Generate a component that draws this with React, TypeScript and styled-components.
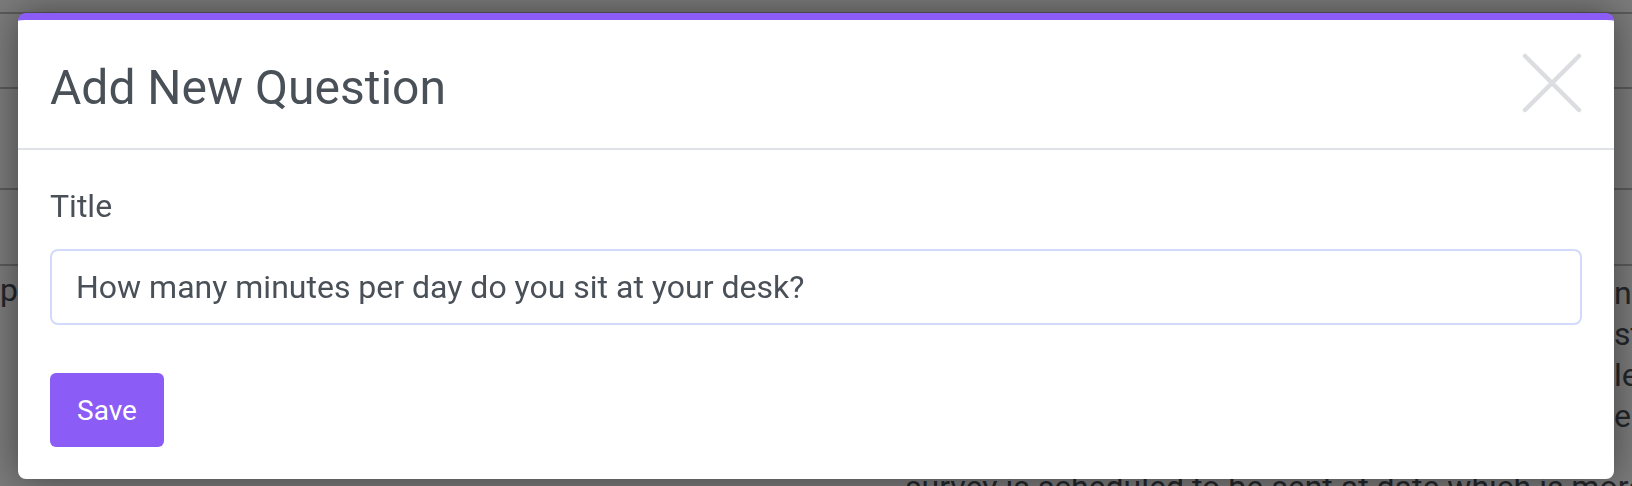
import { useEffect, useRef } from "react";
import styled, { createGlobalStyle } from "styled-components";

const GlobalStyle = createGlobalStyle`
  html, body {
    margin: 0;
    padding: 0;
    width: 100%;
    height: 100%;
    overflow: hidden;
    background: #fff;
    font-family: Roboto, "Noto Sans", Arial, sans-serif;
  }
  * {
    box-sizing: border-box;
  }
`;

// page behind the modal
const Page = styled.div`
  width: 100%;
  height: 486px;
  overflow: hidden;
  color: #495057;
`;

const PageRow = styled.div<{ $h: number }>`
  height: ${(p) => p.$h + 2}px;
  border-bottom: 2px solid #bcbcbc;
`;

const PageText = styled.div`
  display: grid;
  grid-template-columns: 1614px 1fr;
  align-items: start;
  font-size: 32px;
  white-space: nowrap;
`;

const PageCell = styled.div<{ $lh: number; $top?: number }>`
  overflow: hidden;
  line-height: ${(p) => p.$lh}px;
  padding-top: ${(p) => p.$top ?? 0}px;
`;

const PageWideLine = styled.div`
  margin-top: 26px;
  padding-left: 905px;
  font-size: 32px;
  line-height: 49px;
  white-space: nowrap;
`;

const Overlay = styled.div`
  position: fixed;
  inset: 0;
  background: rgba(0, 0, 0, 0.52);
  display: flex;
  justify-content: center;
  align-items: flex-start;
  padding: 13px 18px 0;
`;

const Modal = styled.div`
  width: 100%;
  background: #fff;
  border-top: 7px solid #8b5cf6;
  border-radius: 8px;
  box-shadow: 0 0 36px rgba(0, 0, 0, 0.45);
  overflow: hidden;
`;

const Header = styled.div`
  display: flex;
  justify-content: space-between;
  align-items: flex-start;
  padding: 32px 32px 24px;
  border-bottom: 2px solid #dee2e6;
`;

const Title = styled.h2`
  margin: 0;
  font-size: 48px;
  font-weight: 400;
  line-height: 72px;
  color: #495057;
`;

const CloseButton = styled.button`
  width: 60px;
  height: 60px;
  margin-top: 1px;
  padding: 0;
  border: none;
  background: transparent;
  cursor: pointer;

  & svg {
    display: block;
  }
`;

const Body = styled.div`
  display: flex;
  flex-direction: column;
  align-items: flex-start;
  padding: 32px;
`;

const Label = styled.label`
  font-size: 32px;
  line-height: 48px;
  color: #495057;
  margin-bottom: 19px;
`;

const Input = styled.input`
  width: 100%;
  height: 76px;
  padding: 0 24px;
  font-family: Roboto, "Noto Sans", Arial, sans-serif;
  font-size: 32px;
  color: #495057;
  caret-color: #222;
  border: 2px solid #d1dafb;
  border-radius: 8px;
  outline: none;
  background: #fff;
`;

const SaveButton = styled.button`
  margin-top: 48px;
  height: 74px;
  padding: 0 27px;
  font-family: Roboto, "Noto Sans", Arial, sans-serif;
  font-size: 28px;
  color: #fff;
  background: #8b5cf6;
  border: none;
  border-radius: 6px;
  cursor: pointer;
`;

function App() {
  const inputRef = useRef<HTMLInputElement>(null);

  useEffect(() => {
    const el = inputRef.current;
    if (el) {
      el.focus();
      el.setSelectionRange(el.value.length, el.value.length);
    }
  }, []);

  return (
    <>
      <GlobalStyle />
      <Page>
        <PageRow $h={12} />
        <PageRow $h={73} />
        <PageRow $h={99} />
        <PageRow $h={74} />
        <PageText>
          <PageCell $lh={49}>pending responses</PageCell>
          <PageCell $lh={41} $top={7}>
            <div>nc</div>
            <div>st</div>
            <div>le</div>
            <div>e</div>
          </PageCell>
        </PageText>
        <PageWideLine>
          survey is scheduled to be sent at date which is more than
        </PageWideLine>
      </Page>
      <Overlay>
        <Modal>
          <Header>
            <Title>Add New Question</Title>
            <CloseButton aria-label="Close">
              <svg width="60" height="60" viewBox="0 0 60 60">
                <path
                  d="M3 3 L57 57 M57 3 L3 57"
                  stroke="#dcdde0"
                  strokeWidth="4.5"
                  strokeLinecap="round"
                  fill="none"
                />
              </svg>
            </CloseButton>
          </Header>
          <Body>
            <Label htmlFor="question-title">Title</Label>
            <Input
              id="question-title"
              ref={inputRef}
              defaultValue="How many minutes per day do you sit at your desk?"
            />
            <SaveButton>Save</SaveButton>
          </Body>
        </Modal>
      </Overlay>
    </>
  );
}

export default App;
